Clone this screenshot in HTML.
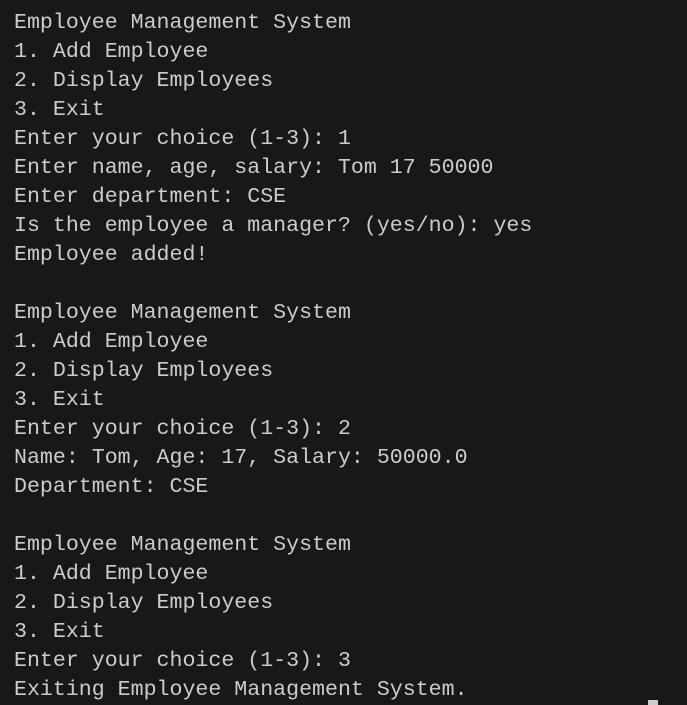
<!DOCTYPE html>
<html><head><meta charset="utf-8"><style>
html,body{margin:0;padding:0;background:#181818;width:687px;height:705px;overflow:hidden}
pre{margin:0;position:absolute;left:14px;top:9px;font-family:"Liberation Mono","DejaVu Sans Mono",monospace;font-size:21.6px;line-height:29px;color:#cccccc;white-space:pre}
.cur{position:absolute;left:648px;top:700px;width:10px;height:5px;background:#cccccc}
</style></head><body><pre>Employee Management System
1. Add Employee
2. Display Employees
3. Exit
Enter your choice (1-3): 1
Enter name, age, salary: Tom 17 50000
Enter department: CSE
Is the employee a manager? (yes/no): yes
Employee added!

Employee Management System
1. Add Employee
2. Display Employees
3. Exit
Enter your choice (1-3): 2
Name: Tom, Age: 17, Salary: 50000.0
Department: CSE

Employee Management System
1. Add Employee
2. Display Employees
3. Exit
Enter your choice (1-3): 3
Exiting Employee Management System.</pre><div class="cur"></div></body></html>
